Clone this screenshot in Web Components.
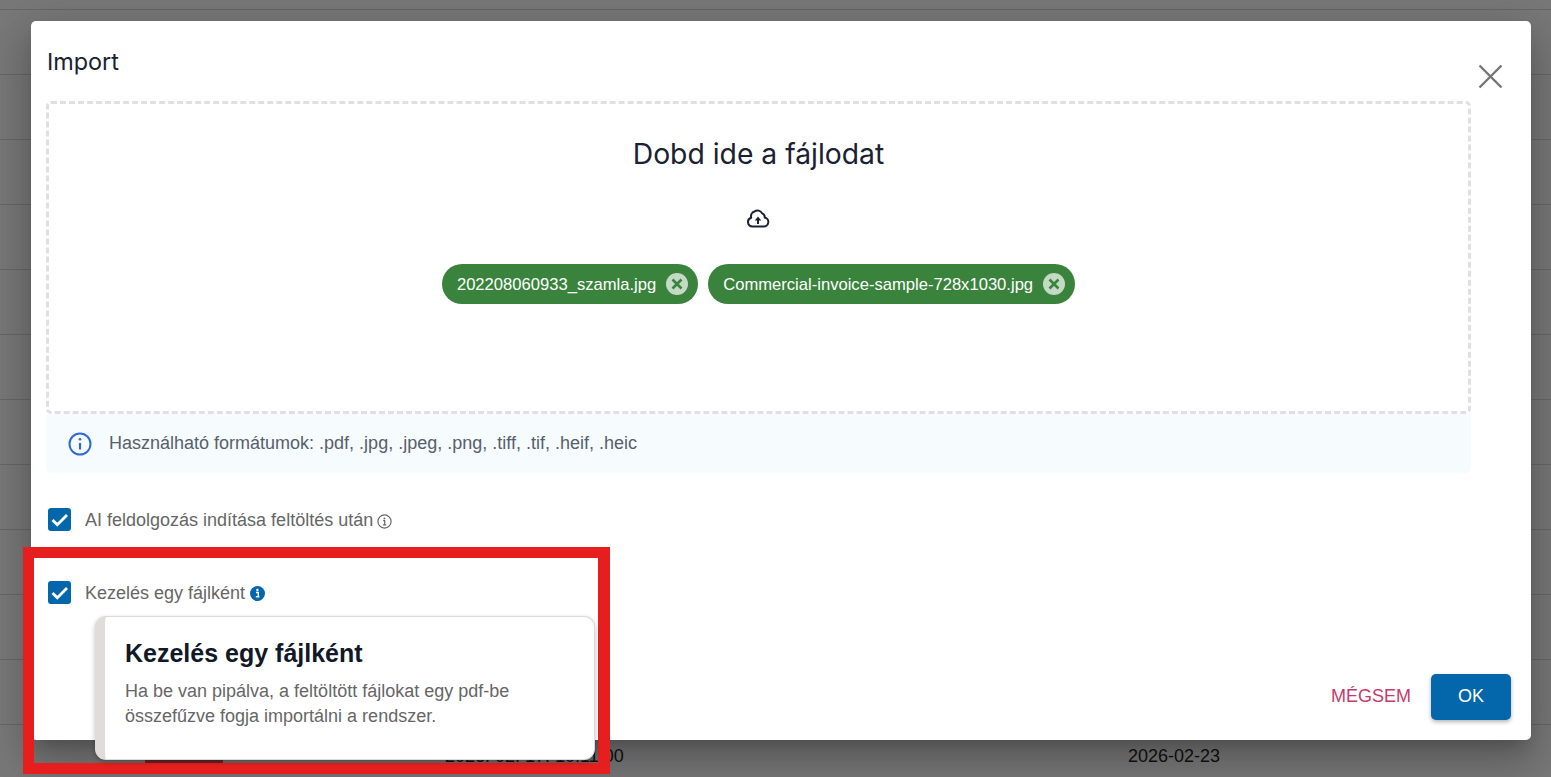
<!DOCTYPE html>
<html lang="hu">
<head>
<meta charset="utf-8">
<title>Import</title>
<style>
    html, body { margin: 0; overflow: hidden; }
    body { background: #787878; font-family: "Liberation Sans", Arial, sans-serif; }
</style>
</head>
<body>
<bg-table>
    <bg-row class="first"></bg-row>
    <bg-row></bg-row><bg-row></bg-row><bg-row></bg-row><bg-row></bg-row><bg-row></bg-row><bg-row></bg-row>
    <bg-row></bg-row><bg-row></bg-row><bg-row></bg-row><bg-row></bg-row><bg-row></bg-row>
    <bg-row class="data"><span class="code"></span><span>2026. 02. 17. 10:11:00</span><span>2026-02-23</span></bg-row>
</bg-table>

<import-dialog heading="Import">
    <drop-zone heading="Dobd ide a fájlodat">
        <file-chip>202208060933_szamla.jpg</file-chip>
        <file-chip>Commercial-invoice-sample-728x1030.jpg</file-chip>
    </drop-zone>
    <info-note>Használható formátumok: .pdf, .jpg, .jpeg, .png, .tiff, .tif, .heif, .heic</info-note>
    <check-row>AI feldolgozás indítása feltöltés után</check-row>
    <check-row class="second" active>
        Kezelés egy fájlként
        <hint-popover slot="popover" heading="Kezelés egy fájlként">Ha be van pipálva, a feltöltött fájlokat egy pdf-be összefűzve fogja importálni a rendszer.</hint-popover>
    </check-row>
</import-dialog>

<mark-frame></mark-frame>

<script>
class BgTable extends HTMLElement {
    constructor() {
        super();
        this.attachShadow({ mode: 'open' }).innerHTML = `
        <style>
            :host { display: flex; flex-direction: column; }
        </style>
        <slot></slot>`;
    }
}

class BgRow extends HTMLElement {
    constructor() {
        super();
        this.attachShadow({ mode: 'open' }).innerHTML = `
        <style>
            :host {
                display: grid;
                grid-template-columns: 300px 683px 1fr;
                flex: none;
                box-sizing: border-box;
                height: 65px;
                padding: 21px 0 0 145px;
                border-bottom: 1px solid #676767;
                font: 18px/20px "Liberation Sans", Arial, sans-serif;
                color: #111;
            }
            :host(.first) { height: 10px; padding: 0; }
            :host(.data) { border-bottom: 0; }
            ::slotted(.code) {
                display: block;
                width: 78px;
                height: 10px;
                margin-top: 7px;
                background: #6f2a2a;
            }
        </style>
        <slot></slot>`;
    }
}

class ImportDialog extends HTMLElement {
    constructor() {
        super();
        this.attachShadow({ mode: 'open' }).innerHTML = `
        <style>
            :host {
                position: absolute;
                left: 31px;
                top: 21px;
                width: 1500px;
                height: 719px;
                display: flex;
                flex-direction: column;
                background: #fff;
                border-radius: 5px;
                box-shadow: 0 11px 15px -7px rgba(0,0,0,.2), 0 24px 38px 3px rgba(0,0,0,.14), 0 9px 46px 8px rgba(0,0,0,.12);
            }
            h2 {
                margin: 0;
                height: 80px;
                box-sizing: border-box;
                padding: 25px 0 0 16px;
                font: 400 23.4px/32px Inter, sans-serif;
                color: #1a2133;
            }
            .close {
                position: absolute;
                right: 28px;
                top: 43px;
                width: 25px;
                height: 25px;
                display: block;
            }
            .body { flex: 1; padding: 0 60px 0 15px; }
            .actions {
                display: flex;
                justify-content: flex-end;
                align-items: center;
                gap: 20px;
                padding: 0 20px 20px 0;
                font-size: 18px;
            }
            .cancel { color: #c63a6a; padding-bottom: 2px; }
            .ok {
                width: 80px;
                height: 46px;
                box-sizing: border-box;
                padding-bottom: 2px;
                display: flex;
                align-items: center;
                justify-content: center;
                background: #0567ab;
                color: #fff;
                border-radius: 5px;
                box-shadow: 0 2px 4px rgba(0,0,0,.3);
            }
        </style>
        <h2></h2>
        <svg class="close" viewBox="0 0 25 25" fill="none" stroke="#757575" stroke-width="2.4">
            <path d="M1.5 1.5l22 22M23.5 1.5l-22 22"/>
        </svg>
        <div class="body"><slot></slot></div>
        <div class="actions"><span class="cancel">MÉGSEM</span><span class="ok">OK</span></div>`;
        this.shadowRoot.querySelector('h2').textContent = this.getAttribute('heading');
    }
}

class DropZone extends HTMLElement {
    constructor() {
        super();
        this.attachShadow({ mode: 'open' }).innerHTML = `
        <style>
            :host {
                display: flex;
                flex-direction: column;
                align-items: center;
                box-sizing: border-box;
                height: 313px;
                border: 3px dashed #e0e0e0;
                border-radius: 5px;
                padding-top: 31px;
            }
            h3 {
                margin: 0;
                font: 400 28.3px/38px Inter, sans-serif;
                color: #1a2133;
            }
            svg { display: block; margin-top: 33px; margin-right: 1px; width: 24px; height: 24px; }
            .chips { display: flex; gap: 10px; margin-top: 34px; }
        </style>
        <h3></h3>
        <svg viewBox="0 0 24 24" fill="none" stroke="#1a2133" stroke-width="2" stroke-linejoin="round">
            <path d="M6.5 20.5a4.5 4.5 0 0 1-1.3-8.8 5 5 0 0 1 3.3-6.2 5 5 0 0 1 7.6 1.9 4 4 0 0 1 2.6 4.2 4.5 4.5 0 0 1-1.2 8.9z"/>
            <path d="M12 18v-6" stroke-width="2"/>
            <path d="M8.8 14.4 12 10.6l3.2 3.8z" fill="#1a2133" stroke="none"/>
        </svg>
        <div class="chips"><slot></slot></div>`;
        this.shadowRoot.querySelector('h3').textContent = this.getAttribute('heading');
    }
}

class FileChip extends HTMLElement {
    constructor() {
        super();
        this.attachShadow({ mode: 'open' }).innerHTML = `
        <style>
            :host {
                display: flex;
                align-items: center;
                gap: 10px;
                height: 40px;
                box-sizing: border-box;
                padding: 0 10px 0 15px;
                border-radius: 20px;
                background: #3a833c;
                color: #fff;
                font: 16.6px "Liberation Sans", Arial, sans-serif;
                white-space: nowrap;
            }
            .name { padding-top: 1px; }
            svg { width: 22px; height: 22px; display: block; }
        </style>
        <span class="name"><slot></slot></span>
        <svg viewBox="0 0 22 22">
            <circle cx="11" cy="11" r="11" fill="#c4dac5"/>
            <path d="M6.5 6.5l9 9M15.5 6.5l-9 9" stroke="#3a833c" stroke-width="2.6" fill="none"/>
        </svg>`;
    }
}

class InfoNote extends HTMLElement {
    constructor() {
        super();
        this.attachShadow({ mode: 'open' }).innerHTML = `
        <style>
            :host {
                display: flex;
                align-items: center;
                gap: 17px;
                height: 59px;
                padding-left: 22px;
                box-sizing: border-box;
                background: #f6fbfe;
                border-radius: 0 0 5px 5px;
                font: 18px "Liberation Sans", Arial, sans-serif;
                color: #56606b;
            }
            svg { width: 24px; height: 24px; display: block; flex: none; }
        </style>
        <svg viewBox="0 0 24 24" fill="none" stroke="#2f6bd6" stroke-width="2">
            <circle cx="12" cy="12" r="10.5"/>
            <path d="M12 11v6.5" stroke-width="2.2"/>
            <circle cx="12" cy="7.3" r="1.3" fill="#2f6bd6" stroke="none"/>
        </svg>
        <slot></slot>`;
    }
}

class CheckRow extends HTMLElement {
    constructor() {
        super();
        this.attachShadow({ mode: 'open' }).innerHTML = `
        <style>
            :host {
                position: relative;
                display: flex;
                align-items: center;
                height: 23px;
                margin: 35px 0 0 2px;
                font: 18px "Liberation Sans", Arial, sans-serif;
                color: #666;
                white-space: nowrap;
            }
            :host(.second) { margin-top: 50px; }
            .box { width: 23px; height: 23px; flex: none; margin-right: 14px; display: block; }
            .label { display: flex; align-items: center; padding-top: 2px; }
            .hint { width: 15px; height: 15px; margin-left: 5px; display: block; flex: none; }
            .outline { margin-top: 2px; margin-left: 4px; }
        </style>
        <svg class="box" viewBox="0 0 23 23">
            <rect width="23" height="23" rx="3" fill="#0567ab"/>
            <path d="M4.5 12l4.8 4.8L19 7" fill="none" stroke="#fff" stroke-width="2.8"/>
        </svg>
        <span class="label">
            <slot></slot>
            <svg class="hint outline" viewBox="0 0 15 15" fill="none">
                <circle cx="7.5" cy="7.5" r="6.6" stroke="#666" stroke-width="1.2"/>
                <path d="M6.2 6.7h1.5v4M6 10.8h3.2" stroke="#666" stroke-width="1.2"/>
                <circle cx="7.4" cy="4.4" r=".95" fill="#666"/>
            </svg>
            <svg class="hint solid" viewBox="0 0 15 15">
                <circle cx="7.5" cy="7.5" r="7.5" fill="#0567ab"/>
                <path d="M6 6.5h2.3v4M5.8 10.8h3.6" fill="none" stroke="#fff" stroke-width="1.4"/>
                <circle cx="7.4" cy="4" r="1.2" fill="#fff"/>
            </svg>
        </span>
        <slot name="popover"></slot>`;
        const active = this.hasAttribute('active');
        this.shadowRoot.querySelector(active ? '.outline' : '.solid').remove();
    }
}

class HintPopover extends HTMLElement {
    constructor() {
        super();
        this.attachShadow({ mode: 'open' }).innerHTML = `
        <style>
            :host {
                position: absolute;
                left: 47px;
                top: 35px;
                width: 500px;
                height: 144px;
                box-sizing: border-box;
                padding: 20px 30px 0 20px;
                background: #fff;
                border: 1px solid #dedada;
                border-left: 10px solid #e0dcdc;
                border-radius: 11px;
                box-shadow: 0 2px 5px rgba(0,0,0,.25);
                white-space: normal;
                z-index: 2;
            }
            h4 {
                margin: 0 0 10px;
                font: 700 25px/32px "Liberation Sans", Arial, sans-serif;
                color: #111827;
            }
            p {
                margin: 0;
                font: 18px/25px "Liberation Sans", Arial, sans-serif;
                color: #666;
            }
        </style>
        <h4></h4>
        <p><slot></slot></p>`;
        this.shadowRoot.querySelector('h4').textContent = this.getAttribute('heading');
    }
}

class MarkFrame extends HTMLElement {
    constructor() {
        super();
        this.attachShadow({ mode: 'open' }).innerHTML = `
        <style>
            :host {
                position: absolute;
                left: 23px;
                top: 547px;
                width: 587px;
                height: 227px;
                box-sizing: border-box;
                border: solid #e61e1e;
                border-width: 11px 12px 11px 11px;
                pointer-events: none;
            }
        </style>`;
    }
}

customElements.define('bg-table', BgTable);
customElements.define('bg-row', BgRow);
customElements.define('import-dialog', ImportDialog);
customElements.define('drop-zone', DropZone);
customElements.define('file-chip', FileChip);
customElements.define('info-note', InfoNote);
customElements.define('check-row', CheckRow);
customElements.define('hint-popover', HintPopover);
customElements.define('mark-frame', MarkFrame);
</script>
</body>
</html>
